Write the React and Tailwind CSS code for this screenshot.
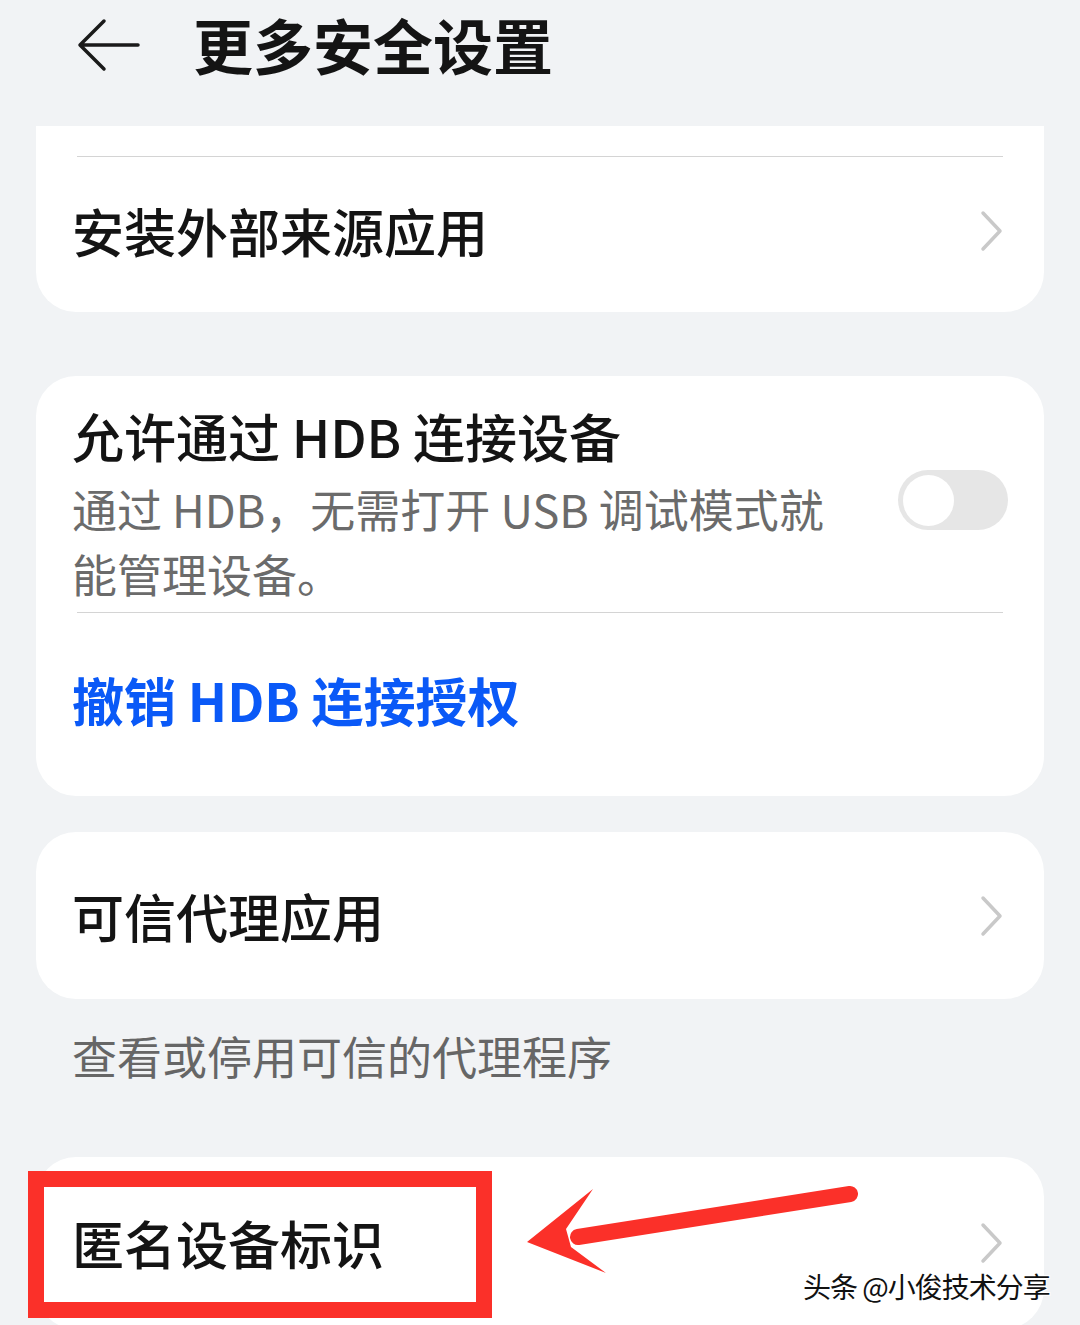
import React from 'react';

const FONT = { fontFamily: '"Noto Sans CJK SC", "Noto Sans", sans-serif' };

function Chevron() {
  return (
    <svg width="24" height="42" viewBox="0 0 24 42" className="shrink-0">
      <path d="M3 3 L20 21 L3 39" fill="none" stroke="#c9c9c9" strokeWidth="3.5" strokeLinecap="round" strokeLinejoin="round" />
    </svg>
  );
}

function Toggle() {
  return (
    <div className="w-[110px] h-[60px] rounded-full bg-[#e6e6e6] flex items-center px-[5px] shrink-0">
      <div className="w-[51px] h-[51px] rounded-full bg-white" />
    </div>
  );
}

export default function App() {
  return (
    <div className="relative w-[1080px] h-[1325px] overflow-hidden bg-[#f1f3f5] text-[#141414]" style={FONT}>
      {/* header */}
      <div className="h-[126px] flex items-start pt-[14px] pl-[76px]">
        <svg width="64" height="60" viewBox="0 0 64 60" className="shrink-0">
          <path d="M62 31 H6 M28 7 L4 31 L28 55" fill="none" stroke="#1a1a1a" strokeWidth="3.5" strokeLinecap="round" strokeLinejoin="round" />
        </svg>
        <h1 className="ml-[53px] text-[60px] leading-[60px] font-bold">更多安全设置</h1>
      </div>

      <div className="px-[36px]">
        {/* card 1 */}
        <div className="bg-white rounded-b-[40px] pb-[7px]">
          <div className="pt-[30px] px-[41px]">
            <div className="h-px bg-[#d4d4d4]" />
          </div>
          <div className="h-[148px] flex items-center justify-between pl-[36px] pr-[40px]">
            <span className="text-[52px] leading-[60px] font-medium">安装外部来源应用</span>
            <Chevron />
          </div>
        </div>

        {/* card 2 */}
        <div className="mt-[64px] bg-white rounded-[40px] pb-[9px]">
          <div className="flex items-start justify-between pt-[30px] pl-[36px] pr-[36px]">
            <div>
              <div className="text-[52px] leading-[60px] font-medium">允许通过 HDB 连接设备</div>
              <div className="mt-[10px] text-[45px] leading-[65px] text-[#6b6b6b]">
                <div>通过 HDB，无需打开 USB 调试模式就</div>
                <div>能管理设备。</div>
              </div>
            </div>
            <div className="mt-[64px]">
              <Toggle />
            </div>
          </div>
          <div className="mt-[6px] px-[41px]">
            <div className="h-px bg-[#d4d4d4]" />
          </div>
          <div className="h-[174px] flex items-center pl-[36px]">
            <span className="text-[52px] leading-[60px] font-bold text-[#0a59f7]">撤销 HDB 连接授权</span>
          </div>
        </div>

        {/* card 3 */}
        <div className="mt-[36px] h-[167px] bg-white rounded-[40px] flex items-center justify-between pl-[36px] pr-[40px]">
          <span className="text-[52px] leading-[60px] font-medium">可信代理应用</span>
          <Chevron />
        </div>

        <p className="mt-[27px] pl-[36px] text-[45px] leading-[60px] text-[#666666]">查看或停用可信的代理程序</p>

        {/* card 4 */}
        <div className="mt-[71px] h-[172px] bg-white rounded-[40px] flex items-center justify-between pl-[36px] pr-[40px]">
          <span className="text-[52px] leading-[60px] font-medium">匿名设备标识</span>
          <Chevron />
        </div>
      </div>

      {/* annotation: red box */}
      <div className="absolute left-[28px] top-[1171px] w-[464px] h-[147px] border-[16px] border-[#fb3029]" />

      {/* annotation: red arrow */}
      <svg className="absolute left-0 top-0 pointer-events-none" width="1080" height="1325" viewBox="0 0 1080 1325">
        <line x1="850" y1="1194" x2="578" y2="1237" stroke="#fb3029" strokeWidth="16" strokeLinecap="round" />
        <polygon points="527,1242 593,1189 566,1229 571,1247 606,1273" fill="#fb3029" />
      </svg>

      {/* watermark */}
      <div
        className="absolute left-[803px] top-[1268px] text-[28px] leading-[36px] tracking-[-1px] text-[#111]"
        style={{ textShadow: '0 0 2px #fff, 0 0 2px #fff, 1px 1px 0 #fff, -1px -1px 0 #fff, 1px -1px 0 #fff, -1px 1px 0 #fff' }}
      >
        头条 @小俊技术分享
      </div>
    </div>
  );
}
